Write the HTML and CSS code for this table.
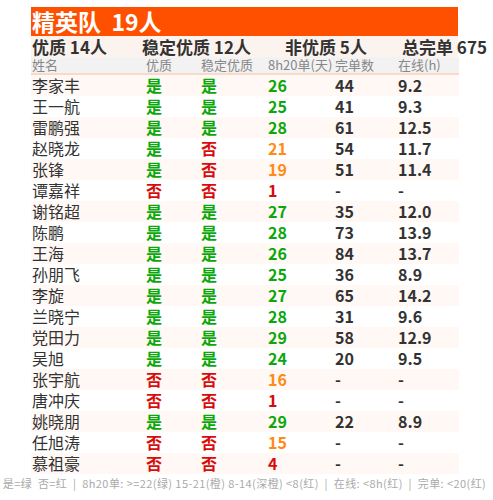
FILE: index.html
```html
<!DOCTYPE html>
<html lang="zh-CN">
<head>
    <meta charset="UTF-8">
    <meta name="viewport" content="width=device-width, initial-scale=1.0">
    <title>精英队</title>
    <link rel="stylesheet" href="styles.css">
</head>
<body>
    <div class="board">
        <div class="team-title">精英队&nbsp;&nbsp;19人</div>

        <div class="summary">
            <span>优质 14人</span>
            <span>稳定优质 12人</span>
            <span>非优质 5人</span>
            <span>总完单 675</span>
        </div>

        <table class="stats">
            <thead>
                <tr>
                    <th class="col-name">姓名</th>
                    <th class="col-good">优质</th>
                    <th class="col-stable">稳定优质</th>
                    <th class="col-8h">8h20单(天)</th>
                    <th class="col-done">完单数</th>
                    <th class="col-online">在线(h)</th>
                </tr>
            </thead>
            <tbody>
                <tr><td class="name">李家丰</td><td class="yes">是</td><td class="yes">是</td><td class="green">26</td><td>44</td><td>9.2</td></tr>
                <tr><td class="name">王一航</td><td class="yes">是</td><td class="yes">是</td><td class="green">25</td><td>41</td><td>9.3</td></tr>
                <tr><td class="name">雷鹏强</td><td class="yes">是</td><td class="yes">是</td><td class="green">28</td><td>61</td><td>12.5</td></tr>
                <tr><td class="name">赵晓龙</td><td class="yes">是</td><td class="no">否</td><td class="orange">21</td><td>54</td><td>11.7</td></tr>
                <tr><td class="name">张锋</td><td class="yes">是</td><td class="no">否</td><td class="orange">19</td><td>51</td><td>11.4</td></tr>
                <tr><td class="name">谭嘉祥</td><td class="no">否</td><td class="no">否</td><td class="red">1</td><td>-</td><td>-</td></tr>
                <tr><td class="name">谢铭超</td><td class="yes">是</td><td class="yes">是</td><td class="green">27</td><td>35</td><td>12.0</td></tr>
                <tr><td class="name">陈鹏</td><td class="yes">是</td><td class="yes">是</td><td class="green">28</td><td>73</td><td>13.9</td></tr>
                <tr><td class="name">王海</td><td class="yes">是</td><td class="yes">是</td><td class="green">26</td><td>84</td><td>13.7</td></tr>
                <tr><td class="name">孙朋飞</td><td class="yes">是</td><td class="yes">是</td><td class="green">25</td><td>36</td><td>8.9</td></tr>
                <tr><td class="name">李旋</td><td class="yes">是</td><td class="yes">是</td><td class="green">27</td><td>65</td><td>14.2</td></tr>
                <tr><td class="name">兰晓宁</td><td class="yes">是</td><td class="yes">是</td><td class="green">28</td><td>31</td><td>9.6</td></tr>
                <tr><td class="name">党田力</td><td class="yes">是</td><td class="yes">是</td><td class="green">29</td><td>58</td><td>12.9</td></tr>
                <tr><td class="name">吴旭</td><td class="yes">是</td><td class="yes">是</td><td class="green">24</td><td>20</td><td>9.5</td></tr>
                <tr><td class="name">张宇航</td><td class="no">否</td><td class="no">否</td><td class="orange">16</td><td>-</td><td>-</td></tr>
                <tr><td class="name">唐冲庆</td><td class="no">否</td><td class="no">否</td><td class="red">1</td><td>-</td><td>-</td></tr>
                <tr><td class="name">姚晓朋</td><td class="yes">是</td><td class="yes">是</td><td class="green">29</td><td>22</td><td>8.9</td></tr>
                <tr><td class="name">任旭涛</td><td class="no">否</td><td class="no">否</td><td class="orange">15</td><td>-</td><td>-</td></tr>
                <tr><td class="name">慕祖豪</td><td class="no">否</td><td class="no">否</td><td class="red">4</td><td>-</td><td>-</td></tr>
            </tbody>
        </table>

        <div class="legend">是=绿&nbsp;&nbsp;否=红&nbsp;&nbsp;|&nbsp;&nbsp;8h20单: &gt;=22(绿) 15-21(橙) 8-14(深橙) &lt;8(红)&nbsp;&nbsp;|&nbsp;&nbsp;在线: &lt;8h(红)&nbsp;&nbsp;|&nbsp;&nbsp;完单: &lt;20(红)</div>
    </div>
</body>
</html>
```

FILE: styles.css
```css
body {
    margin: 0;
    background: #ffffff;
    font-family: "Noto Sans CJK SC", "Noto Sans", sans-serif;
    color: #333;
}

.board {
    width: 427px;
    margin: 7px 0 0 31px;
}

.team-title {
    background: #ff5000;
    color: #fff;
    font-size: 23px;
    font-weight: bold;
    height: 29px;
    line-height: 29px;
    padding-left: 1px;
    white-space: nowrap;
}

.summary {
    display: grid;
    grid-template-columns: 110px 143px 117px 57px;
    height: 21px;
    line-height: 21px;
    background: #fdf3ee;
    font-size: 17px;
    font-weight: bold;
    padding-left: 1px;
    white-space: nowrap;
}

.stats {
    width: 427px;
    border-collapse: collapse;
    table-layout: fixed;
}

.stats th {
    background: #f2f2f2;
    color: #888;
    font-size: 13px;
    font-weight: normal;
    text-align: left;
    height: 16px;
    line-height: 16px;
    padding: 0;
    border-bottom: 2px solid #f8d9ca;
    white-space: nowrap;
}

.col-name { width: 114px; padding-left: 1px !important; }
.col-good { width: 55px; }
.col-stable { width: 67px; }
.col-8h { width: 67px; }
.col-done { width: 63px; }
.col-online { width: 61px; }

.stats td {
    height: 21px;
    line-height: 21px;
    padding: 0;
    font-size: 16px;
    font-weight: bold;
    color: #333;
    white-space: nowrap;
}

.stats tbody tr:nth-child(odd) {
    background: #fff8f5;
}

.stats td.name {
    font-weight: normal;
    padding-left: 1px;
}

.yes, .green {
    color: #0aa80a !important;
}

.no, .red {
    color: #d70c0c !important;
}

.orange {
    color: #ff8a14 !important;
}

.legend {
    margin-left: -31px;
    width: 489px;
    text-align: center;
    font-size: 11px;
    letter-spacing: 0.42px;
    color: #aaa;
    height: 18px;
    line-height: 18px;
    white-space: nowrap;
}

.legend::after {
    content: "";
    display: block;
    margin: 1px 31px 0;
    border-bottom: 1px solid #fde8de;
}
```
